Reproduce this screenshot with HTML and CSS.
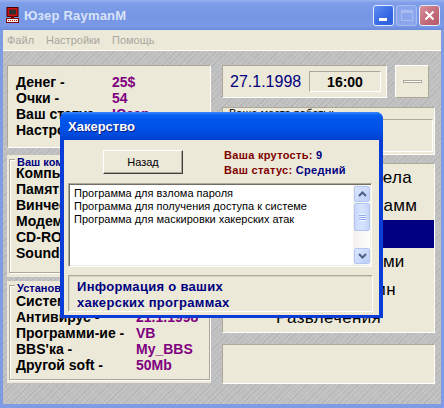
FILE: index.html
```html
<!DOCTYPE html>
<html lang="ru">
<head>
<meta charset="utf-8">
<title>Юзер RaymanM</title>
<link rel="stylesheet" href="styles.css">
</head>
<body>
<div class="window">
  <div class="titlebar">
    <svg class="appicon" width="13" height="16" viewBox="0 0 13 16">
      <rect x="1" y="0.5" width="11" height="9" fill="#d01010" stroke="#400000"/>
      <rect x="3" y="2.5" width="7" height="5" fill="#303030"/>
      <rect x="5" y="9.5" width="3" height="2" fill="#800000"/>
      <rect x="0.5" y="11.5" width="12" height="4" fill="#f0f0f0" stroke="#800000"/>
      <line x1="2" y1="13.5" x2="11" y2="13.5" stroke="#c00000" stroke-dasharray="1 1"/>
    </svg>
    <span class="title">Юзер RaymanM</span>
    <div class="tbtns">
      <div class="tbtn tmin"><span class="minbar"></span></div>
      <div class="tbtn tmax"><span class="maxbox"></span></div>
      <div class="tbtn tclose">
        <svg width="11" height="11" viewBox="0 0 11 11"><path d="M1.5 1.5 L9.5 9.5 M9.5 1.5 L1.5 9.5" stroke="#fff" stroke-width="2"/></svg>
      </div>
    </div>
  </div>
  <div class="frame">
    <div class="menubar">
      <span class="mitem">Файл</span>
      <span class="mitem">Настройки</span>
      <span class="mitem">Помощь</span>
    </div>
    <div class="client">
      <div class="col-left">
        <div class="panel stats">
          <div class="srow"><span class="lbl">Денег -</span><span class="val">25$</span></div>
          <div class="srow"><span class="lbl">Очки -</span><span class="val">54</span></div>
          <div class="srow"><span class="lbl">Ваш статус -</span><span class="val">Юзер</span></div>
          <div class="srow"><span class="lbl">Настроение -</span></div>
        </div>
        <div class="group comp">
          <div class="gtitle">Ваш компьютер</div>
          <div class="gbox">
            <div class="grow"><span class="lbl">Компьютер -</span></div>
            <div class="grow"><span class="lbl">Память -</span></div>
            <div class="grow"><span class="lbl">Винчестер -</span></div>
            <div class="grow"><span class="lbl">Модем -</span></div>
            <div class="grow"><span class="lbl">CD-ROM -</span></div>
            <div class="grow"><span class="lbl">Sound -</span></div>
          </div>
        </div>
        <div class="group soft">
          <div class="gtitle">Установленный soft</div>
          <div class="gbox">
            <div class="grow"><span class="lbl">Система -</span></div>
            <div class="grow"><span class="lbl">Антивирус -</span><span class="val">21.1.1998</span></div>
            <div class="grow"><span class="lbl">Программи-ие -</span><span class="val">VB</span></div>
            <div class="grow"><span class="lbl">BBS'ка -</span><span class="val">My_BBS</span></div>
            <div class="grow"><span class="lbl">Другой soft -</span><span class="val">50Mb</span></div>
          </div>
        </div>
      </div>
      <div class="col-right">
        <div class="toprow">
          <div class="panel datep">
            <span class="date">27.1.1998</span>
            <span class="timebox">16:00</span>
          </div>
          <div class="smallbtn"><span class="dash"></span></div>
        </div>
        <div class="panel workp">
          <div class="worklbl">Ваше место работы:</div>
          <div class="workbox"></div>
        </div>
        <div class="panel menup">
          <div class="mi">Компьютерные дела</div>
          <div class="mi">Разработка программ</div>
          <div class="mi sel"></div>
          <div class="mi">Работа с файлами</div>
          <div class="mi">Поход в магазин</div>
          <div class="mi">Развлечения</div>
        </div>
        <div class="panel bottomp"></div>
      </div>
    </div>
  </div>

  <div class="dialog">
    <div class="dtitle">Хакерство</div>
    <div class="dbody">
      <div class="drow">
        <div class="btn">Назад</div>
        <div class="dinfo">
          <div><span class="dl">Ваша крутость:</span> <span class="dv">9</span></div>
          <div><span class="dl">Ваш статус:</span> <span class="dv">Средний</span></div>
        </div>
      </div>
      <div class="listbox">
        <div class="items">
          <div>Программа для взлома пароля</div>
          <div>Программа для получения доступа к системе</div>
          <div>Программа для маскировки хакерских атак</div>
        </div>
        <div class="vscroll">
          <div class="sbtn">
            <svg width="9" height="6" viewBox="0 0 9 6"><path d="M1 5 L4.5 1.5 L8 5" fill="none" stroke="#4d6185" stroke-width="2"/></svg>
          </div>
          <div class="sthumb"><span class="grip"></span></div>
          <div class="strack"></div>
          <div class="sbtn">
            <svg width="9" height="6" viewBox="0 0 9 6"><path d="M1 1 L4.5 4.5 L8 1" fill="none" stroke="#4d6185" stroke-width="2"/></svg>
          </div>
        </div>
      </div>
      <div class="infobox">Информация о ваших<br>хакерских программах</div>
    </div>
  </div>
</div>
</body>
</html>
```
FILE: styles.css
```css
* { box-sizing: border-box; }
body { margin: 0; font-family: "Liberation Sans", Arial, sans-serif; }

.window {
  position: relative;
  width: 444px;
  height: 408px;
  background: #7e9be4;
  display: flex;
  flex-direction: column;
  overflow: hidden;
}

/* title bar */
.titlebar {
  height: 30px;
  flex: none;
  display: flex;
  align-items: center;
  padding: 0 4px 0 6px;
  background: linear-gradient(#98b2ef 0, #7f9de8 3px, #7596e4 50%, #7a99e6 85%, #6c8cdc 100%);
}
.appicon { flex: none; }
.title {
  margin-left: 5px;
  font: bold 13px "Liberation Sans", Arial, sans-serif;
  color: #d9e3f8;
  letter-spacing: 0.2px;
}
.tbtns { margin-left: auto; display: flex; gap: 2px; }
.tbtn {
  width: 21px;
  height: 21px;
  border-radius: 3px;
  border: 1px solid #e4ebfb;
  display: flex;
  align-items: center;
  justify-content: center;
}
.tmin { background: linear-gradient(135deg, #5f8ff4, #3567e2 60%, #2d5ed8); }
.minbar { width: 8px; height: 3px; background: #fff; margin-top: 8px; margin-right: 2px; }
.tmax { background: #8ba6ec; border-color: #a9bdf0; }
.maxbox { width: 12px; height: 11px; border: 1px solid #a8bcf0; border-top-width: 3px; }
.tclose { background: linear-gradient(135deg, #d7909a, #c06878 60%, #b45a6a); }

/* frame */
.frame {
  flex: 1;
  margin: 0 3px 4px 3px;
  display: flex;
  flex-direction: column;
  background: #c1c1c1;
}
.menubar {
  height: 21px;
  flex: none;
  background: #ece9d8;
  border-bottom: 1px solid #ffffff;
  display: flex;
  align-items: center;
  padding-left: 4px;
  font: 11px "Liberation Sans", Arial, sans-serif;
  color: #a9a7a0;
}
.mitem { margin-right: 12px; }

.client {
  flex: 1;
  display: flex;
  gap: 11px;
  padding: 14px 6px 0 4px;
  background-color: #c0c0c0;
  background-image:
    repeating-linear-gradient(45deg, rgba(255,255,255,0.10) 0 1px, transparent 1px 3px),
    repeating-linear-gradient(-45deg, rgba(0,0,0,0.06) 0 1px, transparent 1px 4px);
}

.panel {
  background: #ece9d8;
  border: 1px solid;
  border-color: #aca899 #ffffff #ffffff #aca899;
}

.lbl, .val { font: bold 14px "Liberation Sans", Arial, sans-serif; white-space: nowrap; }
.lbl { color: #000; }
.val { color: #800080; }

/* left column */
.col-left { width: 204px; flex: none; display: flex; flex-direction: column; }
.stats { height: 83px; padding: 8px 0 0 8px; }
.srow { display: flex; line-height: 17px; }
.stats .lbl { width: 96px; }

.group { background: #ece9d8; padding: 4px 1px 0 2px; position: relative; }
.comp { margin-top: 7px; height: 122px; }
.soft { margin-top: 4px; height: 102px; }
.gtitle {
  position: absolute;
  left: 8px;
  top: 1px;
  padding: 0 2px;
  background: #ece9d8;
  font: bold 11px "Liberation Sans", Arial, sans-serif;
  color: #000080;
  line-height: 12px;
}
.gbox {
  height: 100%;
  border: 1px solid #aca899;
  box-shadow: 1px 1px 0 #fff, inset 1px 1px 0 #fff;
  margin-bottom: 2px;
}
.comp .gbox { padding: 5px 0 0 6px; height: 114px; }
.soft .gbox { padding: 7px 0 0 6px; height: 95px; }
.grow { display: flex; line-height: 16px; }
.soft .lbl { width: 120px; }
.comp .lbl { width: 110px; }

/* right column */
.col-right { width: 213px; flex: none; display: flex; flex-direction: column; }
.toprow { display: flex; gap: 8px; height: 33px; }
.datep { width: 165px; display: flex; align-items: center; padding-left: 7px; }
.date { font: 16px "Liberation Sans", Arial, sans-serif; color: #000080; }
.timebox {
  margin-left: auto;
  margin-right: 5px;
  width: 72px;
  height: 21px;
  border: 1px solid;
  border-color: #aca899 #fff #fff #aca899;
  display: flex;
  align-items: center;
  justify-content: center;
  font: bold 14px "Liberation Sans", Arial, sans-serif;
  color: #000;
}
.smallbtn {
  width: 34px;
  background: #ece9d8;
  border: 1px solid;
  border-color: #fff #aca899 #aca899 #fff;
  display: flex;
  align-items: center;
  justify-content: center;
}
.dash { width: 19px; height: 3px; background: #fff; border: 1px solid #aca899; }

.workp { margin-top: 9px; height: 48px; padding: 0 1px 0 6px; }
.worklbl { font: 11px "Liberation Sans", Arial, sans-serif; color: #000; line-height: 12px; margin-top: -1px; }
.workbox { margin-top: 0; height: 33px; border: 1px solid; border-color: #aca899 #fff #fff #aca899; }

.menup { margin-top: 8px; height: 170px; padding: 0; display: flex; flex-direction: column; }
.mi {
  height: 28px;
  flex: none;
  display: flex;
  align-items: center;
  justify-content: center;
  font: 17px "Liberation Sans", Arial, sans-serif;
  letter-spacing: 0.3px;
  color: #000;
  white-space: nowrap;
}
.mi.sel { background: #000080; color: #fff; }

.bottomp { margin-top: 11px; height: 40px; }

/* dialog */
.dialog {
  position: absolute;
  left: 60px;
  top: 112px;
  width: 323px;
  height: 206px;
  background: #0a3cd8;
  border-radius: 7px 7px 0 0;
  display: flex;
  flex-direction: column;
  padding: 0 4px 3px 4px;
}
.dtitle {
  height: 28px;
  flex: none;
  margin: 0 -4px;
  padding-left: 8px;
  display: flex;
  align-items: center;
  border-radius: 7px 7px 0 0;
  background: linear-gradient(#3c8cff 0, #0a62f4 3px, #0055ea 8px, #0050e6 60%, #0048da 85%, #003fd0 100%);
  font: bold 13px "Liberation Sans", Arial, sans-serif;
  color: #fff;
  text-shadow: 1px 1px 0 #0a1e80;
  padding-top: 1px;
}
.dbody {
  flex: 1;
  background: #ece9d8;
  padding: 10px 5px 0 4px;
  display: flex;
  flex-direction: column;
}
.drow { display: flex; height: 24px; }
.btn {
  margin-left: 35px;
  width: 80px;
  height: 24px;
  background: #ece9d8;
  border: 1px solid;
  border-color: #fff #404040 #404040 #fff;
  box-shadow: inset -1px -1px 0 #aca899;
  display: flex;
  align-items: center;
  justify-content: center;
  font: 11px "Liberation Sans", Arial, sans-serif;
  color: #000;
}
.dinfo {
  margin-left: 41px;
  font: bold 11px "Liberation Sans", Arial, sans-serif;
  line-height: 15px;
  margin-top: -2px;
  letter-spacing: 0.3px;
}
.dl { color: #800000; }
.dv { color: #000080; }

.listbox {
  margin-top: 9px;
  width: 304px;
  height: 84px;
  background: #fff;
  border: 1px solid;
  border-color: #aca899 #fff #fff #aca899;
  box-shadow: inset 1px 1px 0 #716f64, inset -1px -1px 0 #f1efe2;
  display: flex;
  padding: 1px;
}
.items {
  flex: 1;
  padding: 2px 0 0 4px;
  font: 11px "Liberation Sans", Arial, sans-serif;
  line-height: 13px;
  color: #000;
  white-space: nowrap;
}
.vscroll {
  width: 17px;
  display: flex;
  flex-direction: column;
  background: linear-gradient(90deg, #f3f1ec, #fefefe);
  padding: 1px 0 1px 1px;
}
.sbtn {
  height: 16px;
  flex: none;
  border: 1px solid #b5c8f3;
  border-radius: 2px;
  background: linear-gradient(135deg, #dce7fe, #bccff9);
  display: flex;
  align-items: center;
  justify-content: center;
}
.sthumb {
  height: 28px;
  flex: none;
  margin-top: 1px;
  border: 1px solid #b1c5f3;
  border-radius: 2px;
  background: linear-gradient(90deg, #c9d8fc, #d8e4fe 50%, #c4d5fb);
  display: flex;
  align-items: center;
  justify-content: center;
}
.grip {
  width: 7px;
  height: 7px;
  background: repeating-linear-gradient(#eef4fe 0 1px, #8faaf0 1px 2px);
}
.strack { flex: 1; }

.infobox {
  margin-top: 8px;
  width: 305px;
  height: 37px;
  border: 1px solid;
  border-color: #aca899 #fff #fff #aca899;
  box-shadow: inset 1px 1px 0 #d8d4c4;
  padding: 3px 0 0 8px;
  font: bold 13px "Liberation Sans", Arial, sans-serif;
  line-height: 16px;
  color: #000080;
  letter-spacing: 0.3px;
}
```
